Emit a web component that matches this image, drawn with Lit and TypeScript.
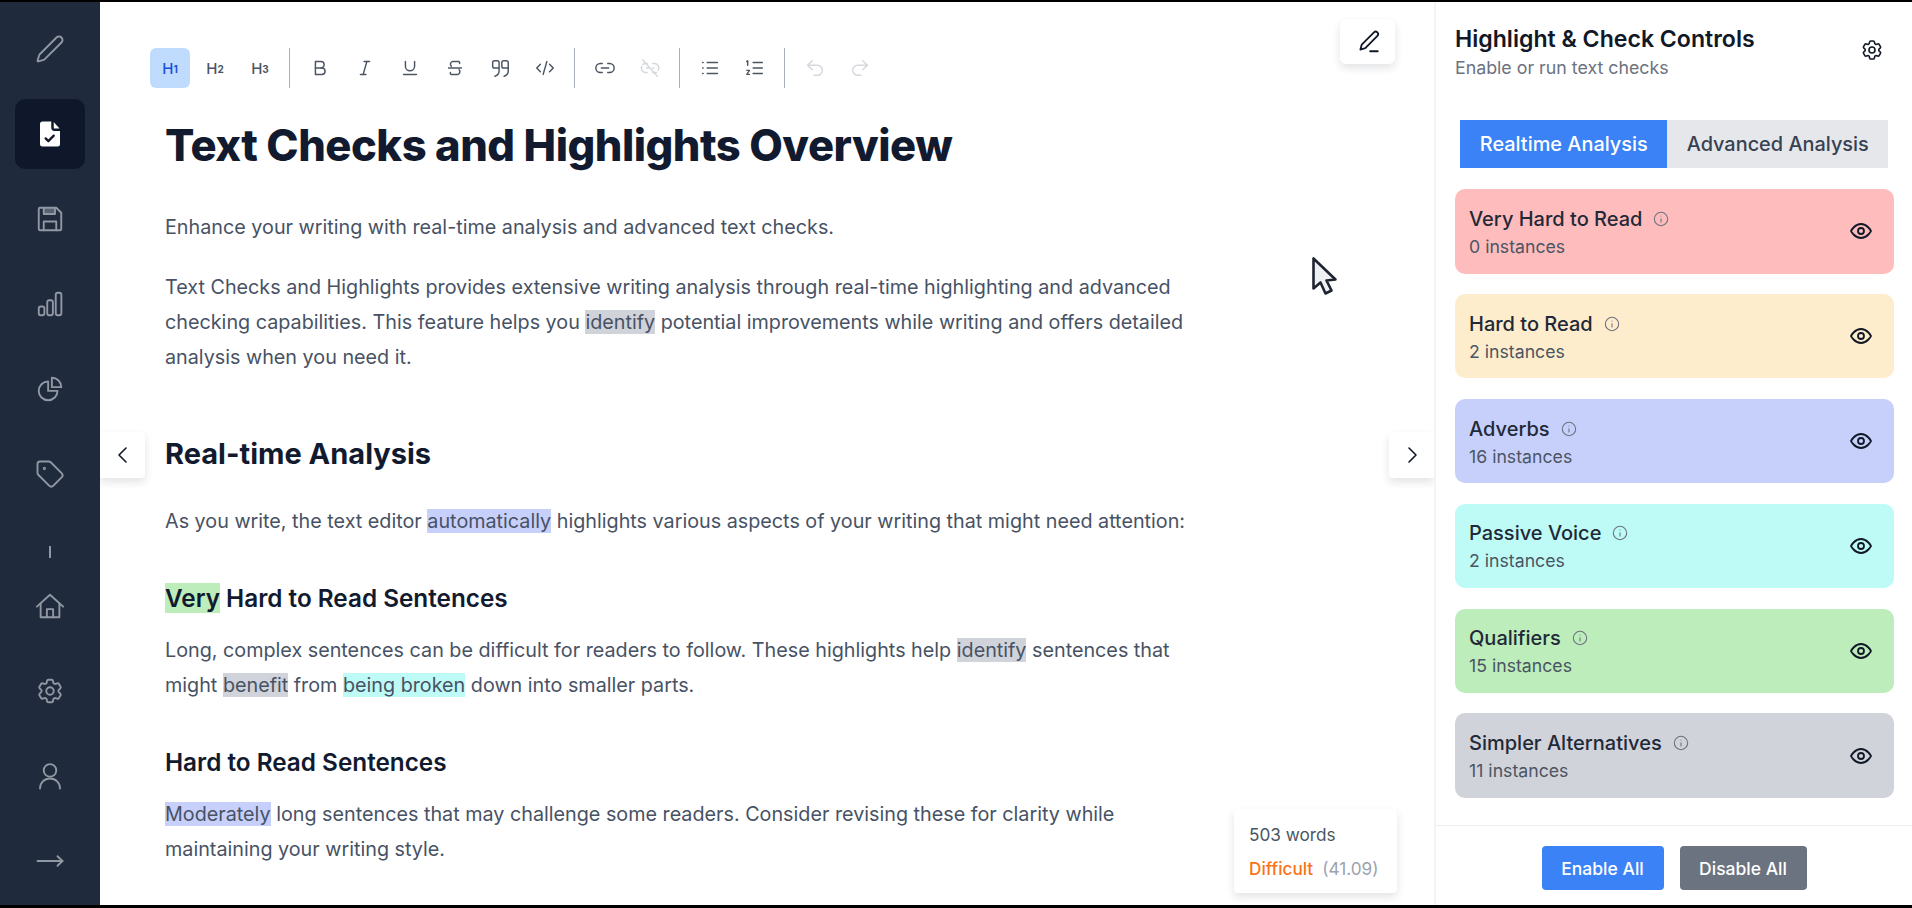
import { LitElement, html, css, svg } from "lit";
import { customElement } from "lit/decorators.js";

const icon = (body: unknown, size = 24, sw = 1.5) =>
  html`<svg width=${size} height=${size} viewBox="0 0 24 24" fill="none" stroke="currentColor" stroke-width=${sw} stroke-linecap="round" stroke-linejoin="round">${body}</svg>`;

const gear = svg`<path d="M9.594 3.94c.09-.542.56-.94 1.11-.94h2.593c.55 0 1.02.398 1.11.94l.213 1.281c.063.374.313.686.645.87.074.04.147.083.22.127.325.196.72.257 1.075.124l1.217-.456a1.125 1.125 0 0 1 1.37.49l1.296 2.247a1.125 1.125 0 0 1-.26 1.431l-1.003.827c-.293.241-.438.613-.43.992a7.723 7.723 0 0 1 0 .255c-.008.378.137.75.43.991l1.004.827c.424.35.534.955.26 1.43l-1.298 2.247a1.125 1.125 0 0 1-1.369.491l-1.217-.456c-.355-.133-.75-.072-1.076.124a6.47 6.47 0 0 1-.22.128c-.331.183-.581.495-.644.869l-.213 1.281c-.09.543-.56.94-1.11.94h-2.594c-.55 0-1.019-.398-1.11-.94l-.213-1.281c-.062-.374-.312-.686-.644-.87a6.52 6.52 0 0 1-.22-.127c-.325-.196-.72-.257-1.076-.124l-1.217.456a1.125 1.125 0 0 1-1.369-.49l-1.297-2.247a1.125 1.125 0 0 1 .26-1.431l1.004-.827c.292-.24.437-.613.43-.991a6.932 6.932 0 0 1 0-.255c.007-.38-.138-.751-.43-.992l-1.004-.827a1.125 1.125 0 0 1-.26-1.43l1.297-2.247a1.125 1.125 0 0 1 1.37-.491l1.216.456c.356.133.751.072 1.076-.124.072-.044.146-.086.22-.128.332-.183.582-.495.644-.869l.214-1.28Z"/><circle cx="12" cy="12" r="3"/>`;

const navTop = [
  svg`<path d="M21.174 6.812a1 1 0 0 0-3.986-3.987L3.842 16.174a2 2 0 0 0-.5.83l-1.321 4.352a.5.5 0 0 0 .623.622l4.353-1.32a2 2 0 0 0 .83-.497z"/>`,
  null,
  svg`<path d="M4 3h13l4 4v13a1 1 0 0 1-1 1H4a1 1 0 0 1-1-1V4a1 1 0 0 1 1-1z"/><path d="M7 21v-7h10v7"/><path d="M7 3v5h9V3" fill="currentColor" fill-opacity=".5"/>`,
  svg`<rect x="3" y="14" width="4.5" height="7" rx="1.6"/><rect x="9.8" y="9" width="4.5" height="12" rx="1.6"/><rect x="16.6" y="3" width="4.5" height="18" rx="1.6"/>`,
  svg`<path d="M10.5 6a7.5 7.5 0 1 0 7.5 7.5h-7.5V6Z"/><path d="M13.5 10.5H21A7.5 7.5 0 0 0 13.5 3v7.5Z"/>`,
  svg`<path d="M12.586 2.586A2 2 0 0 0 11.172 2H4a2 2 0 0 0-2 2v7.172a2 2 0 0 0 .586 1.414l8.704 8.704a2.426 2.426 0 0 0 3.42 0l6.58-6.58a2.426 2.426 0 0 0 0-3.42z"/><circle cx="7.5" cy="7.5" r=".5"/>`,
];

const navBottom = [
  svg`<path d="M1.5 12.5 12 3l10.5 9.5"/><path d="M4.5 10v11h15V10"/><path d="M9.5 21v-6.5h5V21"/>`,
  gear,
  svg`<circle cx="12" cy="7.5" r="5"/><path d="M4 22c0-4.6 3.4-8 8-8s8 3.4 8 8"/>`,
  svg`<path d="M2 12h20"/><path d="M18 8.2l4 3.8-4 3.8"/>`,
];

const toolbar = [
  [
    { text: "H", sub: "1", active: true },
    { text: "H", sub: "2" },
    { text: "H", sub: "3" },
  ],
  [
    { path: svg`<path d="M7 5h6a3.5 3.5 0 0 1 0 7H7z"/><path d="M13 12h1a3.5 3.5 0 0 1 0 7H7v-7"/>` },
    { path: svg`<path d="M11 5h6"/><path d="M7 19h6"/><path d="M14 5l-4 14"/>` },
    { path: svg`<path d="M7 5v5a5 5 0 0 0 10 0V5"/><path d="M5 19h14"/>` },
    { path: svg`<path d="M5 12h14"/><path d="M17 7V6a1 1 0 0 0-1-1H9a3 3 0 0 0-1 5"/><path d="M16.5 14a3 3 0 0 1-1.5 5H8a1 1 0 0 1-1-1v-1"/>` },
    { path: svg`<path d="M11 12H6a2 2 0 0 1-2-2V6a2 2 0 0 1 2-2h3a2 2 0 0 1 2 2v9c0 3-1.5 5-4.5 6"/><path d="M21 12h-5a2 2 0 0 1-2-2V6a2 2 0 0 1 2-2h3a2 2 0 0 1 2 2v9c0 3-1.5 5-4.5 6"/>` },
    { path: svg`<path d="M7 8l-4 4 4 4"/><path d="M17 8l4 4-4 4"/><path d="M14 5l-4 14"/>` },
  ],
  [
    { path: svg`<path d="M9 7H7a5 5 0 0 0 0 10h2"/><path d="M15 7h2a5 5 0 0 1 0 10h-2"/><path d="M8 12h8"/>` },
    { off: true, path: svg`<path d="M9 7H7a5 5 0 0 0-3 1M3 10a5 5 0 0 0 4 7h2"/><path d="M15 7h2a5 5 0 0 1 4 7.5M19 17h-4"/><path d="M8 12h3M15 12h1"/><path d="M4 3l16 18"/>` },
  ],
  [
    { path: svg`<path d="M9 6h11M9 12h11M9 18h11"/><path d="M4 6h.5M4 12h.5M4 18h.5"/>` },
    { path: svg`<path d="M10 6h10M10 12h10M10 18h10"/><path d="M4 9V4L3 5"/><path d="M3 14.5h3l-3 4.5h3" stroke-width="1.4"/>` },
  ],
  [
    { off: true, path: svg`<path d="M9 14L4 9l5-5"/><path d="M4 9h10.5a5.5 5.5 0 0 1 0 11H11"/>` },
    { off: true, path: svg`<path d="M15 14l5-5-5-5"/><path d="M20 9H9.5a5.5 5.5 0 0 0 0 11H13"/>` },
  ],
];

const checks = [
  { name: "Very Hard to Read", count: "0 instances", color: "#ffbcbd" },
  { name: "Hard to Read", count: "2 instances", color: "#feedcd" },
  { name: "Adverbs", count: "16 instances", color: "#c7d0fb" },
  { name: "Passive Voice", count: "2 instances", color: "#befbf6" },
  { name: "Qualifiers", count: "15 instances", color: "#bdedba" },
  { name: "Simpler Alternatives", count: "11 instances", color: "#d1d3da" },
];

@customElement("app-root")
export class AppRoot extends LitElement {
  static styles = css`
    :host {
      display: block;
      height: 908px;
      font-family: Inter, "Liberation Sans", sans-serif;
      color: #111827;
      overflow: hidden;
    }
    .frame {
      display: flex;
      height: 908px;
      box-sizing: border-box;
      border-top: 2px solid #000;
      border-bottom: 3px solid #000;
      background: #fff;
    }
    .side {
      width: 100px;
      flex: none;
      background: #1f2a3c;
      color: #9198a3;
      display: flex;
      flex-direction: column;
      align-items: center;
      gap: 15px;
      padding-top: 12px;
      box-sizing: border-box;
    }
    .nav {
      width: 70px;
      height: 70px;
      flex: none;
      display: flex;
      align-items: center;
      justify-content: center;
      border-radius: 10px;
    }
    .nav.on {
      background: #0f172a;
      color: #fff;
    }
    .rule {
      width: 2px;
      height: 12px;
      flex: none;
      background: #9198a3;
      margin: 22px 0 -2px;
    }
    .main {
      flex: 1;
      min-width: 0;
      position: relative;
      padding: 46px 0 0 50px;
      overflow: hidden;
    }
    .tools {
      display: flex;
      align-items: center;
      color: #4b5563;
    }
    .group {
      display: flex;
      gap: 5px;
      padding-right: 9px;
      margin-right: 10px;
      border-right: 1px solid #a9afba;
    }
    .group:last-child {
      border: 0;
    }
    .tool {
      width: 40px;
      height: 40px;
      border-radius: 6px;
      display: flex;
      align-items: center;
      justify-content: center;
      font-size: 15px;
      font-weight: 500;
    }
    .tool sub {
      font-size: 10px;
      font-weight: 700;
      vertical-align: baseline;
      position: relative;
      top: 1px;
    }
    .tool.on {
      background: #bfdbfe;
      color: #1d4ed8;
    }
    .tool.off {
      color: #d5d8de;
    }
    article {
      width: 1040px;
      margin: 32px 0 0 15px;
      font-size: 19.75px;
      line-height: 35px;
      color: #475264;
    }
    article p {
      margin: 0;
    }
    h1,
    h2,
    h3 {
      margin: 0;
      color: #111a2e;
    }
    h1 {
      font-size: 43.5px;
      line-height: 50px;
      font-weight: 800;
      letter-spacing: -0.5px;
      margin-bottom: 40px;
    }
    .p1 {
      margin-bottom: 25px;
    }
    h2 {
      font-size: 29px;
      line-height: 40px;
      font-weight: 700;
      margin: 59px 0 30px;
    }
    h3 {
      font-size: 24.3px;
      line-height: 32px;
      font-weight: 600;
      margin: 43px 0 19px;
    }
    mark {
      color: inherit;
    }
    .g {
      background: #d1d3da;
    }
    .b {
      background: #c7d0fb;
    }
    .c {
      background: #befbf6;
    }
    .q {
      background: #bdedba;
    }
    .float {
      position: absolute;
      background: #fff;
      box-shadow: 0 4px 8px rgba(17, 24, 39, 0.12);
      display: flex;
      align-items: center;
      justify-content: center;
      color: #111827;
    }
    .pen {
      right: 39px;
      top: 17px;
      width: 55px;
      height: 45px;
      border-radius: 6px;
    }
    .prev {
      left: 0;
      top: 430px;
      width: 45px;
      height: 46px;
      border-radius: 0 4px 4px 0;
    }
    .next {
      right: 0;
      top: 430px;
      width: 45px;
      height: 46px;
      border-radius: 4px 0 0 4px;
    }
    .stats {
      right: 37px;
      bottom: 12px;
      width: 163px;
      height: 84px;
      box-sizing: border-box;
      padding: 0 15px;
      border-radius: 4px;
      flex-direction: column;
      align-items: flex-start;
      justify-content: center;
      gap: 13px;
      font-size: 17.2px;
      color: #4b5563;
    }
    .stats b {
      font-weight: 500;
      color: #f97316;
    }
    .stats span span {
      color: #9ca3af;
      margin-left: 9px;
    }
    .cursor {
      position: absolute;
      left: 1211px;
      top: 254px;
    }
    .panel {
      width: 478px;
      flex: none;
      box-sizing: border-box;
      border-left: 2px solid #f3f4f6;
      display: flex;
      flex-direction: column;
    }
    .head {
      display: flex;
      justify-content: space-between;
      align-items: center;
      padding: 22px 28px 0 19px;
      height: 78px;
      box-sizing: border-box;
    }
    .head svg {
      margin-bottom: 5px;
    }
    .head h4 {
      margin: 0 0 4px;
      font-size: 23.1px;
      line-height: 28px;
      font-weight: 600;
    }
    .head small {
      display: block;
      font-size: 17.8px;
      line-height: 22px;
      color: #6b7280;
    }
    .tabs {
      display: flex;
      margin: 40px 24px 0;
      height: 48px;
      font-size: 19.9px;
      font-weight: 500;
    }
    .tab {
      display: flex;
      align-items: center;
      justify-content: center;
      background: #e5e7eb;
      color: #374151;
      flex: 220;
    }
    .tab.on {
      background: #3b82f6;
      color: #fff;
      flex: 207;
    }
    .cards {
      display: flex;
      flex-direction: column;
      gap: 20.4px;
      margin: 21px 18px 0 19px;
      flex: 1;
    }
    .card {
      height: 84.5px;
      flex: none;
      border-radius: 10px;
      display: flex;
      align-items: center;
      justify-content: space-between;
      padding: 0 21px 0 14px;
    }
    .label {
      margin-top: 2px;
    }
    .name {
      display: flex;
      align-items: center;
      gap: 11px;
      font-size: 20px;
      line-height: 28px;
      font-weight: 500;
      color: #1f2937;
    }
    .name svg {
      color: #6b7280;
    }
    .count {
      font-size: 17.7px;
      line-height: 27px;
      color: #4b5563;
    }
    .foot {
      border-top: 1px solid #eceef1;
      height: 80px;
      flex: none;
      display: flex;
      justify-content: center;
      gap: 16px;
      padding-top: 20px;
      box-sizing: border-box;
    }
    .btn {
      height: 44px;
      border-radius: 4px;
      background: #3b82f6;
      color: #fff;
      font-size: 17.5px;
      font-weight: 500;
      display: flex;
      align-items: center;
      justify-content: center;
      width: 122px;
    }
    .btn.gray {
      background: #6b7280;
      width: 127px;
    }
  `;

  render() {
    return html`
      <div class="frame">
        <nav class="side">
          ${navTop.map((p) =>
            p
              ? html`<div class="nav">${icon(p, 30)}</div>`
              : html`<div class="nav on">
                  <svg width="30" height="30" viewBox="0 0 24 24">
                    <path fill="#fff" d="M6 2h7v5a2.5 2.5 0 0 0 2.5 2.5H20V20a2 2 0 0 1-2 2H6a2 2 0 0 1-2-2V4a2 2 0 0 1 2-2z" />
                    <path fill="#fff" d="M15 2.4 19.6 7.5H15z" />
                    <path fill="none" stroke="#0f172a" stroke-width="1.8" stroke-linecap="round" stroke-linejoin="round" d="M8.5 15.5l2.2 2.2 4.3-4.4" />
                  </svg>
                </div>`
          )}
          <div class="rule"></div>
          ${navBottom.map((p) => html`<div class="nav">${icon(p, 30)}</div>`)}
        </nav>

        <main class="main">
          <div class="tools">
            ${toolbar.map(
              (group) => html`<div class="group">
                ${group.map((t: any) =>
                  html`<div class="tool ${t.active ? "on" : ""} ${t.off ? "off" : ""}">
                    ${t.path ? icon(t.path, 22, 1.6) : html`${t.text}<sub>${t.sub}</sub>`}
                  </div>`
                )}
              </div>`
            )}
          </div>
          <article>
            <h1>Text Checks and Highlights Overview</h1>
            <p class="p1">Enhance your writing with real-time analysis and advanced text checks.</p>
            <p>
              Text Checks and Highlights provides extensive writing analysis through real-time highlighting and advanced
              checking capabilities. This feature helps you <mark class="g">identify</mark> potential improvements while
              writing and offers detailed analysis when you need it.
            </p>
            <h2>Real-time Analysis</h2>
            <p>
              As you write, the text editor <mark class="b">automatically</mark> highlights various aspects of your writing
              that might need attention:
            </p>
            <h3><mark class="q">Very</mark> Hard to Read Sentences</h3>
            <p>
              Long, complex sentences can be difficult for readers to follow. These highlights help
              <mark class="g">identify</mark> sentences that might <mark class="g">benefit</mark> from
              <mark class="c">being broken</mark> down into smaller parts.
            </p>
            <h3>Hard to Read Sentences</h3>
            <p>
              <mark class="b">Moderately</mark> long sentences that may challenge some readers. Consider revising these for
              clarity while maintaining your writing style.
            </p>
          </article>

          <div class="float pen">
            ${icon(svg`<path d="M17.5 3.2a2.2 2.2 0 0 1 3.2 3.1L9.5 17.6 5 19l1.2-4.5z"/><path d="M14 20.5h7"/>`, 26, 1.7)}
          </div>
          <div class="float prev">${icon(svg`<path d="M15 5l-7 7 7 7"/>`, 24, 1.6)}</div>
          <div class="float next">${icon(svg`<path d="M9 5l7 7-7 7"/>`, 24, 1.6)}</div>
          <div class="float stats">
            <span>503 words</span>
            <span><b>Difficult</b><span>(41.09)</span></span>
          </div>
          <svg class="cursor" width="30" height="42" viewBox="0 0 30 42">
            <path fill="#eef0f3" stroke="#1f2430" stroke-width="2.6" stroke-linejoin="round" d="M2.5 2.5v30l7-6 5 11 6-3-5-10 9-1z" />
          </svg>
        </main>

        <aside class="panel">
          <div class="head">
            <div>
              <h4>Highlight &amp; Check Controls</h4>
              <small>Enable or run text checks</small>
            </div>
            ${icon(gear, 24, 1.6)}
          </div>
          <div class="tabs">
            <div class="tab on">Realtime Analysis</div>
            <div class="tab">Advanced Analysis</div>
          </div>
          <div class="cards">
            ${checks.map(
              (c) => html`<div class="card" style="background:${c.color}">
                <div class="label">
                  <div class="name">
                    ${c.name}
                    ${icon(svg`<circle cx="12" cy="12" r="10"/><path d="M12 16.5v-5"/><path d="M12 7.5h.01"/>`, 16, 1.6)}
                  </div>
                  <div class="count">${c.count}</div>
                </div>
                ${icon(svg`<path d="M2 12s3.6-7 10-7 10 7 10 7-3.6 7-10 7-10-7-10-7z"/><circle cx="12" cy="12" r="3"/>`, 24, 1.8)}
              </div>`
            )}
          </div>
          <div class="foot">
            <div class="btn">Enable All</div>
            <div class="btn gray">Disable All</div>
          </div>
        </aside>
      </div>
    `;
  }
}
